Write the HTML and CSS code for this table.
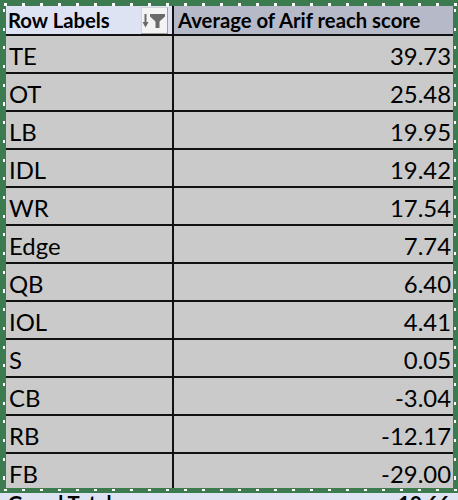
FILE: index.html
```html
<!DOCTYPE html>
<html>
<head>
<meta charset="utf-8">
<link rel="stylesheet" href="styles.css">
</head>
<body>
<div class="sheet">
  <div class="pivot">
    <div class="cell head head-label">
      <span>Row Labels</span>
      <span class="filter-btn">
        <svg width="27" height="27" viewBox="0 0 27 27">
          <rect x="3.5" y="7" width="2" height="9" fill="#6a6a6a"/>
          <path d="M1.5 15 H7.5 L4.5 20.5 Z" fill="#6a6a6a"/>
          <path d="M9 7 H24 V9.5 L18.5 14.5 V21 H14.5 V14.5 L9 9.5 Z" fill="#6a6a6a"/>
        </svg>
      </span>
    </div>
    <div class="cell head head-value">Average of Arif reach score</div>

    <div class="cell label">TE</div><div class="cell num">39.73</div>
    <div class="cell label">OT</div><div class="cell num">25.48</div>
    <div class="cell label">LB</div><div class="cell num">19.95</div>
    <div class="cell label">IDL</div><div class="cell num">19.42</div>
    <div class="cell label">WR</div><div class="cell num">17.54</div>
    <div class="cell label">Edge</div><div class="cell num">7.74</div>
    <div class="cell label">QB</div><div class="cell num">6.40</div>
    <div class="cell label">IOL</div><div class="cell num">4.41</div>
    <div class="cell label">S</div><div class="cell num">0.05</div>
    <div class="cell label">CB</div><div class="cell num">-3.04</div>
    <div class="cell label">RB</div><div class="cell num">-12.17</div>
    <div class="cell label last">FB</div><div class="cell num last">-29.00</div>
  </div>
</div>
<div class="total">
  <span class="total-label">Grand Total</span>
  <span class="total-value">10.66</span>
</div>
</body>
</html>
```

FILE: styles.css
```css
html, body {
  margin: 0;
  padding: 0;
}
body {
  width: 458px;
  height: 500px;
  overflow: hidden;
  background: #dde3f3;
  font-family: "Lato", "Liberation Sans", sans-serif;
  color: #000;
}
.sheet {
  width: 458px;
  box-sizing: border-box;
  padding: 6px 5px 5px 6px;
  background:
    repeating-linear-gradient(90deg, #fff 0 3px, transparent 3px 18px) 4px 3px / 100% 3px no-repeat,
    repeating-linear-gradient(180deg, #fff 0 3px, transparent 3px 18.7px) 3px 9px / 2px 100% no-repeat,
    repeating-linear-gradient(90deg, #fff 0 3px, transparent 3px 18px) 4px calc(100% - 2px) / 100% 2px no-repeat,
    repeating-linear-gradient(180deg, #fff 0 3px, transparent 3px 18.7px) 454px 9px / 2px 100% no-repeat,
    #3c7a4f;
}
.pivot {
  display: grid;
  grid-template-columns: 166px 279px;
  grid-template-rows: 28px repeat(11, 36px) 34px;
  gap: 2px;
  background: #111;
}
.cell {
  background: #cacaca;
  display: flex;
  align-items: center;
  font-size: 23.9px;
  padding: 2px 2px 0 3px;
  box-sizing: border-box;
  white-space: nowrap;
}
.cell.last {
  padding-top: 4px;
}
.num {
  justify-content: flex-end;
}
.head {
  font-size: 20.3px;
  font-weight: bold;
  padding: 0 4px 0 2px;
}
.head-label {
  background: #dde3f3;
  justify-content: space-between;
}
.head-value {
  background: #b6bac8;
  padding-left: 4px;
}
.filter-btn {
  display: flex;
  width: 27px;
  height: 27px;
  box-sizing: border-box;
  background: #f3f3f3;
  border: 1px solid #d4d4d4;
  border-right-color: #a0a0a0;
  border-bottom-color: #a0a0a0;
}
.filter-btn svg {
  margin: -1px;
}
.total {
  display: flex;
  justify-content: space-between;
  font-size: 20.3px;
  font-weight: bold;
  line-height: 20px;
  padding: 0 8px;
  background: #dde3f3;
}
```
